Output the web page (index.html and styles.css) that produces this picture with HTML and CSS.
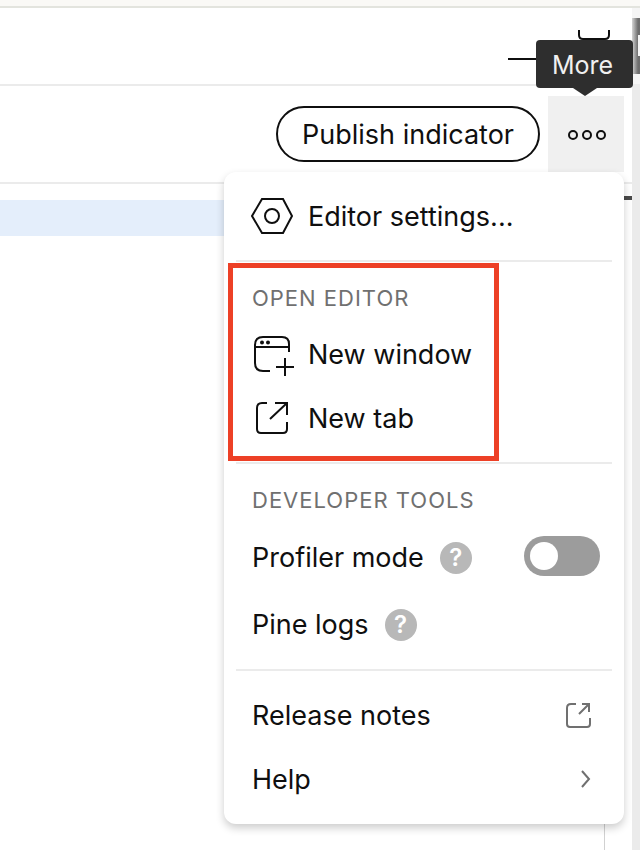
FILE: index.html
```html
<!DOCTYPE html>
<html lang="en">
<head>
    <meta charset="UTF-8">
    <meta name="viewport" content="width=device-width, initial-scale=1.0">
    <title>Pine Editor</title>
    <link rel="stylesheet" href="styles.css">
</head>
<body>
    <div class="topbar"></div>
    <div class="page">
        <main class="panel">
            <header class="titlebar">
                <button class="win-btn" aria-label="Minimize">
                    <svg width="32" height="32" viewBox="0 0 32 32"><path d="M0 29h32"/></svg>
                </button>
                <button class="win-btn" aria-label="Maximize">
                    <svg width="32" height="32" viewBox="0 0 32 32"><path d="M1 0v5q0 4 4 4h22q4 0 4-4V0"/></svg>
                </button>
            </header>
            <div class="toolbar">
                <button class="publish">Publish indicator</button>
                <div class="more">
                    <button class="more-btn" aria-label="More">
                        <svg width="40" height="12" viewBox="0 0 40 12"><circle cx="7" cy="7" r="4"/><circle cx="21" cy="7" r="4"/><circle cx="35" cy="7" r="4"/></svg>
                    </button>
                    <div class="tooltip">More</div>
                    <nav class="menu">
                        <section class="group">
                            <a class="item" href="#">
                                <svg class="icon" width="40" height="40" viewBox="0 1 40 40"><path d="M10 3h21l9 17-9 17H10L0 20z"/><circle cx="20" cy="20" r="7"/></svg>
                                Editor settings...
                            </a>
                        </section>
                        <section class="group">
                            <h2 class="caption">Open editor</h2>
                            <a class="item" href="#">
                                <svg class="icon" width="40" height="40" viewBox="0 1 40 40"><path d="M18 37h-7q-8 0-8-8V11q0-8 8-8h19q7 0 7 7v8M3 13h34M33 24v18M24 33h18"/><circle class="dot" cx="10" cy="8.500" r="2"/><circle class="dot" cx="16" cy="8.500" r="2"/></svg>
                                New window
                            </a>
                            <a class="item" href="#">
                                <svg class="icon" width="40" height="40" viewBox="0 1 40 40"><path d="M15 5h-5q-5 0-5 5v21q0 4 4 4h22q4 0 4-4v-7M23 5h12v12M35 5L18 21"/></svg>
                                New tab
                            </a>
                            <!-- red highlight round the section -->
                            <div class="mark"></div>
                        </section>
                        <section class="group tools">
                            <h2 class="caption">Developer tools</h2>
                            <div class="item">
                                <label for="profiler">Profiler mode</label>
                                <button class="help" aria-label="About profiler mode">?</button>
                                <input class="switch" type="checkbox" id="profiler">
                            </div>
                            <div class="item">
                                <a href="#">Pine logs</a>
                                <button class="help" aria-label="About Pine logs">?</button>
                            </div>
                        </section>
                        <section class="group">
                            <a class="item" href="#">
                                Release notes
                                <svg class="tail" width="44" height="44" viewBox="0 1 44 44"><path d="M20 11h-5q-4 0-4 4v16q0 3 3 3h17q3 0 3-3v-6M26 11h7v8M33 11L23 21"/></svg>
                            </a>
                            <a class="item" href="#">
                                Help
                                <svg class="tail" width="44" height="44" viewBox="0 1 44 44"><path d="M26 14l7 8-7 8"/></svg>
                            </a>
                        </section>
                    </nav>
                </div>
            </div>
            <div class="editor">
                <div class="code"><div class="line"></div></div>
                <div class="ruler"></div>
            </div>
        </main>
        <aside class="side">
            <div class="thumb"></div>
        </aside>
    </div>
</body>
</html>
```
FILE: styles.css
```css
*{
    box-sizing: border-box;
    margin: 0;
    padding: 0;
}
body{
    min-height: 100vh;
    display: flex;
    flex-direction: column;
    overflow: hidden;
    background: #fff;
    color: #0f0f0f;
    font-family: Inter, "Liberation Sans", sans-serif;
    font-size: 27px;
    line-height: 32px;
}
button{
    border: none;
    background: none;
    color: inherit;
    font: inherit;
}
a{
    color: inherit;
    text-decoration: none;
}
svg{
    display: block;
    flex: none;
    overflow: visible;
    fill: none;
    stroke: #0f0f0f;
    stroke-width: 2;
}
.topbar{
    height: 8px;
    background: #faf9f6;
    border-bottom: 2px solid #e3e4de;
}
.page{
    flex: 1;
    display: grid;
    grid-template-columns: 1fr 8px;
}
.panel{
    display: flex;
    flex-direction: column;
}
.titlebar{
    height: 78px;
    padding-right: 22px;
    display: flex;
    justify-content: flex-end;
    align-items: center;
    gap: 38px;
    border-bottom: 2px solid #ebebeb;
}
.toolbar{
    height: 98px;
    padding-right: 8px;
    display: flex;
    justify-content: flex-end;
    align-items: center;
    gap: 8px;
    border-bottom: 2px solid #ebebeb;
}
.publish{
    height: 56px;
    padding: 2px 24px 0;
    border: 2px solid #0f0f0f;
    border-radius: 28px;
}
.more{
    position: relative;
}
.more-btn{
    width: 76px;
    height: 76px;
    display: flex;
    justify-content: center;
    align-items: center;
    background: #f0f0f0;
}
.tooltip{
    position: absolute;
    top: -56px;
    left: -12px;
    padding: 9px 20px 7px 16px;
    border-radius: 4px;
    background: #2e2e2e;
    color: #f0f0f0;
    font-size: 25px;
}
.tooltip::after{
    content: "";
    position: absolute;
    top: 100%;
    left: 50%;
    margin-left: -12px;
    border: 12px solid transparent;
    border-top: 8px solid #2e2e2e;
    border-bottom: none;
}

/* menu */
.menu{
    position: absolute;
    top: 100%;
    right: 0;
    width: 400px;
    padding-bottom: 1px;
    border-radius: 12px;
    background: #fff;
    box-shadow: 0 4px 8px rgba(0, 0, 0, 0.2);
}
.group{
    position: relative;
    padding: 12px 24px 12px 28px;
}
.group + .group{
    margin-top: 2px;
}
.group + .group::before{
    content: "";
    position: absolute;
    top: -2px;
    left: 12px;
    right: 12px;
    height: 2px;
    background: #ebebeb;
}
.item{
    height: 64px;
    padding-top: 2px;
    display: flex;
    align-items: center;
    gap: 16px;
}
.tools .item{
    height: 66px;
}
.tools .item + .item{
    margin-top: 1px;
}
.caption{
    color: #707070;
    font-size: 22px;
    font-weight: 400;
    line-height: 48px;
    letter-spacing: 1px;
    text-transform: uppercase;
}
.dot{
    fill: #0f0f0f;
    stroke: none;
}
.tail{
    margin-left: auto;
    stroke: #707070;
}
.mark{
    position: absolute;
    top: 1px;
    bottom: 1px;
    left: 4px;
    width: 271px;
    border: 5px solid #ed4026;
    pointer-events: none;
}
.help{
    width: 32px;
    height: 32px;
    border-radius: 50%;
    background: #b8b8b8;
    color: #fff;
    font-size: 24px;
    font-weight: 600;
    line-height: 32px;
}
.switch{
    appearance: none;
    width: 76px;
    height: 40px;
    margin: 0 0 4px auto;
    padding: 6px;
    border-radius: 20px;
    background: #9c9c9c;
}
.switch::before{
    content: "";
    display: block;
    width: 28px;
    height: 28px;
    border-radius: 50%;
    background: #fff;
}
.switch:checked::before{
    margin-left: auto;
}

/* editor area */
.editor{
    flex: 1;
    display: grid;
    grid-template-columns: 1fr 27px;
}
.code{
    padding-top: 16px;
    border-right: 1px solid #d1d1d1;
}
.line{
    height: 36px;
    background: #e4eefb;
}
.ruler{
    height: 16px;
    border-bottom: 4px solid #4a4a4a;
}
.side{
    padding-top: 10px;
    background: linear-gradient(#f5f5f5 76px, #ebebeb 76px);
}
.thumb{
    height: 56px;
    padding: 17px 0 18px 6px;
    background: linear-gradient(to right, #d4d4d4, #6e6e6e 6px);
}
.thumb::before{
    content: "";
    display: block;
    height: 100%;
    background: #f5f5f5;
}
```
